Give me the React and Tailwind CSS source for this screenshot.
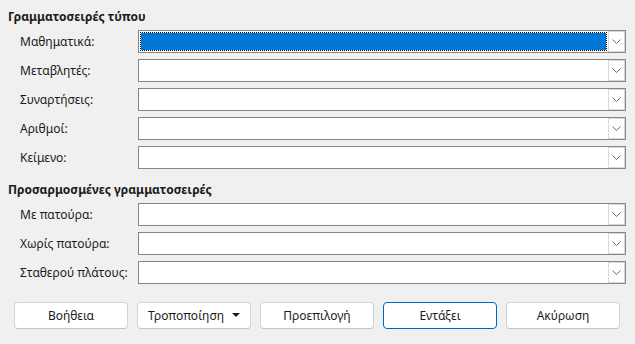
import React from "react";

const fontStack = { fontFamily: '"Noto Sans", "Open Sans", sans-serif' };

function Chevron() {
  return (
    <svg width="9" height="5" viewBox="0 0 9 5" fill="none">
      <path d="M0.5 0.5 L4.5 4.5 L8.5 0.5" stroke="#6b6b6b" strokeWidth="1" />
    </svg>
  );
}

function Combo({ focused }) {
  return (
    <div className="flex h-[23px] w-[488px] border border-[#868686] bg-white">
      <div className="flex-1 p-px">
        {focused ? (
          <div className="h-full border border-dotted border-black bg-[#0078d7] bg-clip-padding" />
        ) : null}
      </div>
      <div className="flex w-[17px] items-center justify-center border border-[#dadada] bg-white">
        <Chevron />
      </div>
    </div>
  );
}

function Row({ label, focused }) {
  return (
    <div className="flex items-center">
      <div className="w-[130px] pl-3 text-[12px] text-[#1b1b1b]">{label}</div>
      <Combo focused={focused} />
    </div>
  );
}

function Button({ children, primary, menu }) {
  return (
    <div
      className={`relative flex h-[27px] w-[114px] items-center justify-center rounded-[4px] border bg-white text-[12px] text-[#1b1b1b] ${
        primary ? "border-[#0067c0]" : "border-[#d4d4d4] border-b-[#c4c4c4]"
      }`}
    >
      {menu ? (
        <>
          <span className="pr-4">{children}</span>
          <svg className="absolute right-[10px] top-[10px]" width="8" height="4" viewBox="0 0 8 4">
            <path d="M0 0 H8 L4 4 Z" fill="#1b1b1b" />
          </svg>
        </>
      ) : (
        children
      )}
    </div>
  );
}

export default function App() {
  return (
    <div className="h-[344px] w-[635px] bg-[#f0f0f0] px-2 pt-[9px]" style={fontStack}>
      <div className="text-[12px] font-bold leading-[16px] text-[#1b1b1b]">Γραμματοσειρές τύπου</div>
      <div className="mt-[5px] flex flex-col gap-[6px]">
        <Row label="Μαθηματικά:" focused />
        <Row label="Μεταβλητές:" />
        <Row label="Συναρτήσεις:" />
        <Row label="Αριθμοί:" />
        <Row label="Κείμενο:" />
      </div>
      <div className="mt-[13px] text-[12px] font-bold leading-[16px] text-[#1b1b1b]">
        Προσαρμοσμένες γραμματοσειρές
      </div>
      <div className="mt-[5px] flex flex-col gap-[6px]">
        <Row label="Με πατούρα:" />
        <Row label="Χωρίς πατούρα:" />
        <Row label="Σταθερού πλάτους:" />
      </div>
      <div className="mt-[18px] flex gap-[9px] pl-[6px]">
        <Button>Βοήθεια</Button>
        <Button menu>Τροποποίηση</Button>
        <Button>Προεπιλογή</Button>
        <Button primary>Εντάξει</Button>
        <Button>Ακύρωση</Button>
      </div>
    </div>
  );
}
